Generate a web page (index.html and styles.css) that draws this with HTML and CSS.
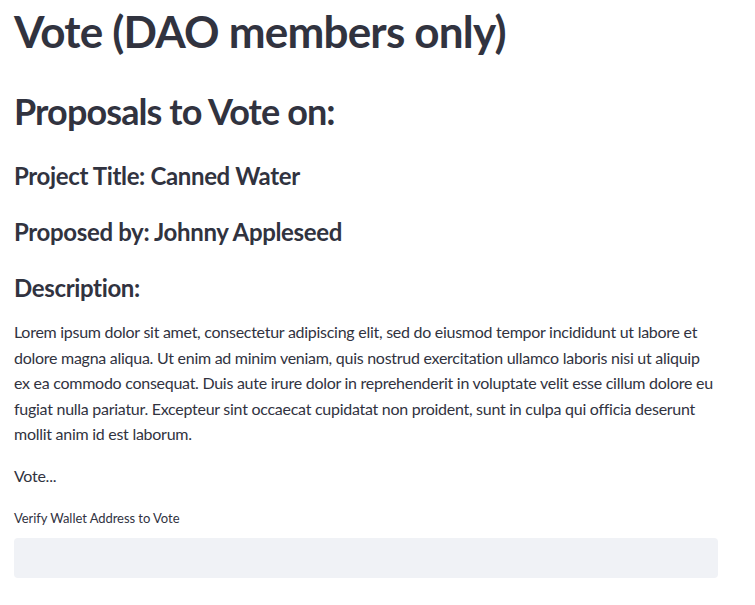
FILE: index.html
```html
<!DOCTYPE html>
<html>
<head>
<meta charset="utf-8">
<link rel="stylesheet" href="styles.css">
</head>
<body>
<main class="page">
  <h1 class="title">Vote (DAO members only)</h1>
  <h2 class="subtitle">Proposals to Vote on:</h2>
  <h3 class="heading heading-first">Project Title: Canned Water</h3>
  <h3 class="heading">Proposed by: Johnny Appleseed</h3>
  <h3 class="heading">Description:</h3>
  <p class="text text-first">Lorem ipsum dolor sit amet, consectetur adipiscing elit, sed do eiusmod tempor incididunt ut labore et dolore magna aliqua. Ut enim ad minim veniam, quis nostrud exercitation ullamco laboris nisi ut aliquip ex ea commodo consequat. Duis aute irure dolor in reprehenderit in voluptate velit esse cillum dolore eu fugiat nulla pariatur. Excepteur sint occaecat cupidatat non proident, sunt in culpa qui officia deserunt mollit anim id est laborum.</p>
  <p class="text">Vote...</p>
  <div class="field">
    <label class="label" for="wallet">Verify Wallet Address to Vote</label>
    <input class="input" id="wallet" type="text">
  </div>
</main>
</body>
</html>
```
FILE: styles.css
```css
html, body {
  margin: 0;
  padding: 0;
  background: #ffffff;
}
.page {
  width: 704px;
  padding: 0 14px;
  font-family: Lato, "Noto Sans", sans-serif;
  color: #31333f;
  display: flex;
  flex-direction: column;
}
.title {
  font-size: 44px;
  font-weight: 700;
  line-height: 52px;
  letter-spacing: -0.8px;
  margin: 5px 0 0;
}
.subtitle {
  font-size: 36px;
  font-weight: 700;
  line-height: 44px;
  letter-spacing: -0.9px;
  margin: 32px 0 0;
}
.heading {
  font-size: 24px;
  font-weight: 700;
  line-height: 32px;
  letter-spacing: -0.35px;
  margin: 24px 0 0;
}
.heading-first {
  margin-top: 27px;
}
.text {
  font-size: 16px;
  line-height: 25.6px;
  letter-spacing: -0.27px;
  margin: 16px 0 0;
}
.text-first {
  margin-top: 15px;
}
.field {
  display: flex;
  flex-direction: column;
  margin-top: 20px;
}
.label {
  font-size: 13px;
  line-height: 18px;
  letter-spacing: -0.05px;
  margin-bottom: 11px;
}
.input {
  height: 40px;
  border: none;
  border-radius: 4px;
  background: #f0f2f6;
  padding: 0 12px;
  box-sizing: border-box;
  outline: none;
}
```
